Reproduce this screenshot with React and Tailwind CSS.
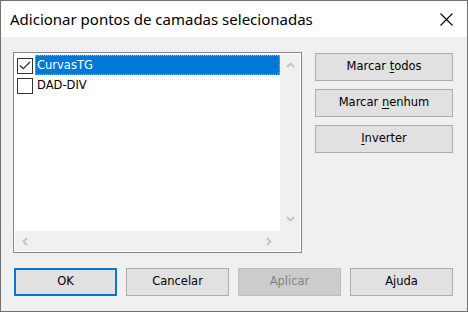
import React from "react";

const ui = { fontFamily: '"DejaVu Sans", sans-serif' };
const title = { fontFamily: '"Noto Sans", sans-serif' };

function Btn({ children, className = "" }) {
  return (
    <div
      className={`flex items-center justify-center h-[28px] border border-[#adadad] bg-[#e1e1e1] text-[11.5px] text-black ${className}`}
      style={ui}
    >
      {children}
    </div>
  );
}

function Chevron({ dir }) {
  const pts = {
    up: "1,5 4.5,1.5 8,5",
    down: "1,1 4.5,4.5 8,1",
    left: "5,1 1.5,4.5 5,8",
    right: "1,1 4.5,4.5 1,8",
  }[dir];
  const vert = dir === "up" || dir === "down";
  return (
    <svg width={vert ? 9 : 6} height={vert ? 6 : 9} viewBox={vert ? "0 0 9 6" : "0 0 6 9"}>
      <polyline points={pts} fill="none" stroke="#c3c3c3" strokeWidth="1.8" />
    </svg>
  );
}

export default function App() {
  return (
    <div className="w-[468px] h-[312px] border border-[#727272] bg-[#f0f0f0] flex flex-col overflow-hidden">
      <div className="h-[36px] bg-white flex items-center justify-between pl-[9px] pr-[14px] shrink-0">
        <span className="text-[15px] text-black leading-none" style={title}>
          Adicionar pontos de camadas selecionadas
        </span>
        <svg width="13" height="13" viewBox="0 0 13 13" className="mt-[1px]">
          <path d="M0.5 0.5 L12.5 12.5 M12.5 0.5 L0.5 12.5" stroke="#000" strokeWidth="1.1" />
        </svg>
      </div>
      <div className="flex flex-col pt-[15px]">
        <div className="flex">
          <div className="ml-[12px] w-[289px] h-[201px] border border-[#828790] bg-white p-[1px] flex flex-col">
            <div className="flex flex-1 min-h-0">
              <div className="flex-1 pt-[1px] flex flex-col text-[11.5px]" style={ui}>
                <div className="flex items-start h-[20px]">
                  <div className="ml-[2px] mt-[3px] w-[16px] h-[16px] border border-[#333333] bg-white flex items-center justify-center shrink-0">
                    <svg width="14" height="14" viewBox="0 0 14 14">
                      <polyline points="1.8,6.5 5.3,9.6 12,3" fill="none" stroke="#333333" strokeWidth="1.3" />
                    </svg>
                  </div>
                  <div className="ml-[2px] flex-1 h-[20px] bg-[#0078d7] border border-dotted border-[#f7a030] text-white pl-[1px] leading-[18px]">
                    CurvasTG
                  </div>
                </div>
                <div className="flex items-start h-[20px]">
                  <div className="ml-[2px] mt-[3px] w-[16px] h-[16px] border border-[#333333] bg-white shrink-0" />
                  <div className="ml-[2px] flex-1 h-[20px] border border-transparent text-black pl-[1px] leading-[18px]">
                    DAD-DIV
                  </div>
                </div>
              </div>
              <div className="w-[20px] bg-[#f0f0f0] flex flex-col items-center justify-between pt-[8px] pb-[9px]">
                <Chevron dir="up" />
                <Chevron dir="down" />
              </div>
            </div>
            <div className="h-[20px] flex shrink-0">
              <div className="flex-1 bg-[#f0f0f0] flex items-center justify-between pl-[7px] pr-[8px]">
                <Chevron dir="left" />
                <Chevron dir="right" />
              </div>
              <div className="w-[20px] bg-[#f0f0f0]" />
            </div>
          </div>
          <div className="ml-[13px] mt-[1px] w-[138px] flex flex-col gap-[8px]">
            <Btn>
              Marcar&nbsp;<span className="underline underline-offset-2">t</span>odos
            </Btn>
            <Btn>
              Marcar&nbsp;<span className="underline underline-offset-2">n</span>enhum
            </Btn>
            <Btn>
              <span className="underline underline-offset-2">I</span>nverter
            </Btn>
          </div>
        </div>
        <div className="flex mt-[15px] ml-[13px] gap-[9px]">
          <div
            className="w-[103px] h-[28px] border-2 border-[#0078d7] bg-[#e1e1e1] flex items-center justify-center text-[11.5px] text-black"
            style={ui}
          >
            OK
          </div>
          <Btn className="w-[103px]">Cancelar</Btn>
          <Btn className="w-[103px] !bg-[#cccccc] !border-[#bfbfbf] !text-[#838383]">Aplicar</Btn>
          <Btn className="w-[103px]">Ajuda</Btn>
        </div>
      </div>
    </div>
  );
}
